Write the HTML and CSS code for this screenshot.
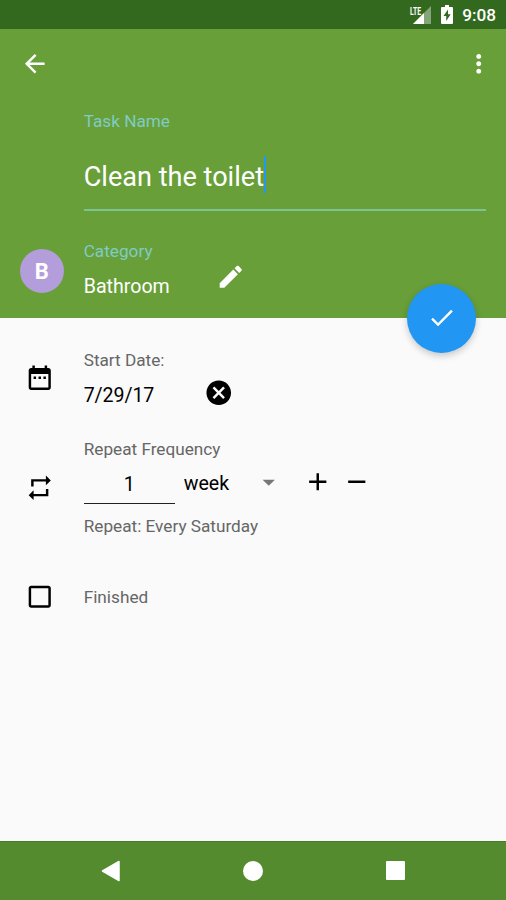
FILE: index.html
```html
<!DOCTYPE html>
<html lang="en">
<head>
<meta charset="utf-8">
<title>Edit task</title>
<link rel="stylesheet" href="styles.css">
</head>
<body>
<div class="screen">
  <div class="status">
    <svg class="signal" width="24" height="20" viewBox="0 0 24 20"><path class="dim" d="M22 1v18H4z"/><path d="M15 8v11H4z"/><text x="1" y="9.5" textLength="11" lengthAdjust="spacingAndGlyphs">LTE</text></svg>
    <svg class="battery" width="12" height="19" viewBox="0 0 12 19"><path fill-rule="evenodd" d="M4 0h4v2h3q1 0 1 1v15q0 1-1 1H1q-1 0-1-1V3q0-1 1-1h3zM7 4.5 2.5 11H5.2v5L9.7 9.2H7z"/></svg>
    <span class="time">9:08</span>
  </div>
  <header class="header">
    <div class="toolbar">
      <svg class="icon" viewBox="0 0 24 24"><path d="M20 11H7.83l5.59-5.59L12 4l-8 8 8 8 1.41-1.41L7.83 13H20v-2z"/></svg>
      <svg class="icon" viewBox="0 0 24 24"><path d="M12 8c1.1 0 2-.9 2-2s-.9-2-2-2-2 .9-2 2 .9 2 2 2zm0 2c-1.1 0-2 .9-2 2s.9 2 2 2 2-.9 2-2-.9-2-2-2zm0 6c-1.1 0-2 .9-2 2s.9 2 2 2 2-.9 2-2-.9-2-2-2z"/></svg>
    </div>
    <div class="name-field">
      <div class="label">Task Name</div>
      <div class="name-input"><span>Clean the toilet</span><i class="cursor"></i></div>
    </div>
    <div class="category">
      <div class="avatar">B</div>
      <div class="category-text">
        <div class="label">Category</div>
        <div class="value">Bathroom</div>
      </div>
      <svg class="icon pencil" viewBox="0 0 24 24"><path d="M3 17.25V21h3.75L17.81 9.94l-3.75-3.75L3 17.25zM20.71 7.04c.39-.39.39-1.02 0-1.41l-2.34-2.34c-.39-.39-1.02-.39-1.41 0l-1.83 1.83 3.75 3.75 1.83-1.83z"/></svg>
    </div>
    <div class="fab"><svg class="icon" viewBox="0 0 24 24"><path d="M9 16.17 4.83 12l-1.42 1.41L9 19 21 7l-1.41-1.41z"/></svg></div>
  </header>
  <main class="content">
    <section class="row date-row">
      <svg class="icon lead" viewBox="0 0 24 24"><path d="M9 11H7v2h2v-2zm4 0h-2v2h2v-2zm4 0h-2v2h2v-2zm2-7h-1V2h-2v2H8V2H6v2H5c-1.11 0-1.99.9-1.99 2L3 20c0 1.1.89 2 2 2h14c1.1 0 2-.9 2-2V6c0-1.1-.9-2-2-2zm0 16H5V9h14v11z"/></svg>
      <div class="date-text">
        <div class="label">Start Date:</div>
        <div class="value">7/29/17</div>
      </div>
      <svg class="icon clear" viewBox="0 0 24 24"><path d="M12 2C6.47 2 2 6.47 2 12s4.47 10 10 10 10-4.47 10-10S17.53 2 12 2zm5 13.59L15.59 17 12 13.41 8.41 17 7 15.59 10.59 12 7 8.41 8.41 7 12 10.59 15.59 7 17 8.41 13.41 12 17 15.59z"/></svg>
    </section>
    <section class="row repeat-row">
      <svg class="icon lead" viewBox="0 0 24 24"><path d="M7 7h10v3l4-4-4-4v3H5v6h2V7zm10 10H7v-3l-4 4 4 4v-3h12v-6h-2v4z"/></svg>
      <div class="repeat-body">
        <div class="label">Repeat Frequency</div>
        <div class="frequency">
          <div class="count">1</div>
          <div class="unit">week</div>
          <svg class="icon caret" viewBox="0 0 24 24"><path d="M7 9.5l5 5 5-5z"/></svg>
          <svg class="icon plus" viewBox="0 0 24 24"><path d="M19 13h-6v6h-2v-6H5v-2h6V5h2v6h6v2z"/></svg>
          <svg class="icon minus" viewBox="0 0 24 24"><path d="M19 13H5v-2h14v2z"/></svg>
        </div>
        <div class="label">Repeat: Every Saturday</div>
      </div>
    </section>
    <section class="row finished-row">
      <svg class="icon lead" viewBox="0 0 24 24"><path d="M19 5v14H5V5h14m0-2H5c-1.1 0-2 .9-2 2v14c0 1.1.9 2 2 2h14c1.1 0 2-.9 2-2V5c0-1.1-.9-2-2-2z"/></svg>
      <div class="label">Finished</div>
    </section>
  </main>
  <nav class="nav">
    <svg width="20" height="22" viewBox="0 0 20 22"><path d="M18 1.5v19L1.5 11z" stroke="#fff" stroke-width="1.5" stroke-linejoin="round"/></svg>
    <svg class="home" width="20" height="20" viewBox="0 0 20 20"><circle cx="10" cy="10" r="10"/></svg>
    <svg width="19" height="19" viewBox="0 0 19 19"><rect width="19" height="19" rx="1"/></svg>
  </nav>
</div>
</body>
</html>
```
FILE: styles.css
```css
* { box-sizing: border-box; }
body { margin: 0; font-family: Roboto, "Liberation Sans", sans-serif; }
svg { display: block; flex: none; fill: currentColor; }
.screen { width: 506px; height: 900px; display: flex; flex-direction: column; background: #fafafa; color: #000; overflow: hidden; }

.status { height: 29px; flex: none; background: #33691e; color: #fff; display: flex; align-items: center; justify-content: flex-end; padding-right: 10px; }
.signal { margin: 0 8px 0 0; }
.signal .dim { opacity: .4; }
.signal text { font-size: 11px; font-weight: 700; }
.battery { margin-right: 9px; }
.time { font-size: 17.2px; font-weight: 500; line-height: 29px; padding-top: 2px; }

.header { position: relative; height: 289px; flex: none; background: #689f38; color: #fff; }
.icon { width: 29.5px; height: 29.5px; }
.toolbar { height: 70px; padding: 0 12.5px 0 19.5px; display: flex; align-items: center; justify-content: space-between; }
.label { font-size: 17.2px; line-height: 20px; color: #666; white-space: nowrap; }
.value { font-size: 19.6px; line-height: 24px; white-space: nowrap; }
.header .label { color: #80cbc4; }
.name-field { margin: 11px 20px 0 83.7px; }
.name-field .label { padding-top: 1px; height: 20px; }
.name-input { height: 81px; display: flex; align-items: center; border-bottom: 2px solid #7cc592; font-size: 27.1px; line-height: 32px; padding-top: 15px; }
.cursor { width: 2px; height: 37px; margin-top: -6px; background: #2196f3; }
.category { display: flex; align-items: flex-start; padding: 30px 0 0 19.7px; }
.avatar { width: 44px; height: 44px; margin: 7.5px 20px 0 0; border-radius: 50%; background: #b39ddb; text-align: center; font-size: 22px; font-weight: 700; line-height: 46px; }
.category-text { width: 132.3px; }
.category .value { margin-top: 14px; }
.pencil { margin-top: 20.5px; }
.fab { position: absolute; right: 30px; bottom: -34.5px; width: 69px; height: 69px; border-radius: 50%; background: #2196f3; display: flex; align-items: center; justify-content: center; box-shadow: 0 3px 7px rgba(0,0,0,.2); }

.content { flex: 1; padding-left: 24.6px; }
.row { display: flex; align-items: flex-start; }
.lead { margin-right: 29.6px; }
.date-row { padding-top: 32px; }
.date-row .lead { margin-top: 12.5px; }
.date-text { width: 119.9px; }
.date-row .value { margin-top: 14px; letter-spacing: -.1px; }
.clear { margin-top: 28px; }
.repeat-row { padding-top: 31px; }
.repeat-row .lead { margin-top: 33.5px; }
.frequency { display: flex; align-items: flex-start; height: 57px; }
.count { width: 91px; height: 45px; padding-top: 13px; border-bottom: 1px solid #222; text-align: center; font-size: 19.6px; line-height: 25px; }
.unit { width: 78.9px; padding: 13px 0 0 9px; font-size: 19.6px; line-height: 24px; }
.caret { margin-top: 8.5px; color: #777; }
.plus { margin: 8.3px 0 0 19.5px; }
.minus { margin: 8.3px 0 0 10px; }
.finished-row { padding-top: 46px; }
.finished-row .label { padding-top: 5px; }

.nav { height: 59px; flex: none; background: #558b2f; color: #fff; border-top: 1px solid #4b7a2b; display: flex; align-items: center; justify-content: space-between; padding: 0 101px 1px 101px; }
.home { margin-right: 2px; }
```
